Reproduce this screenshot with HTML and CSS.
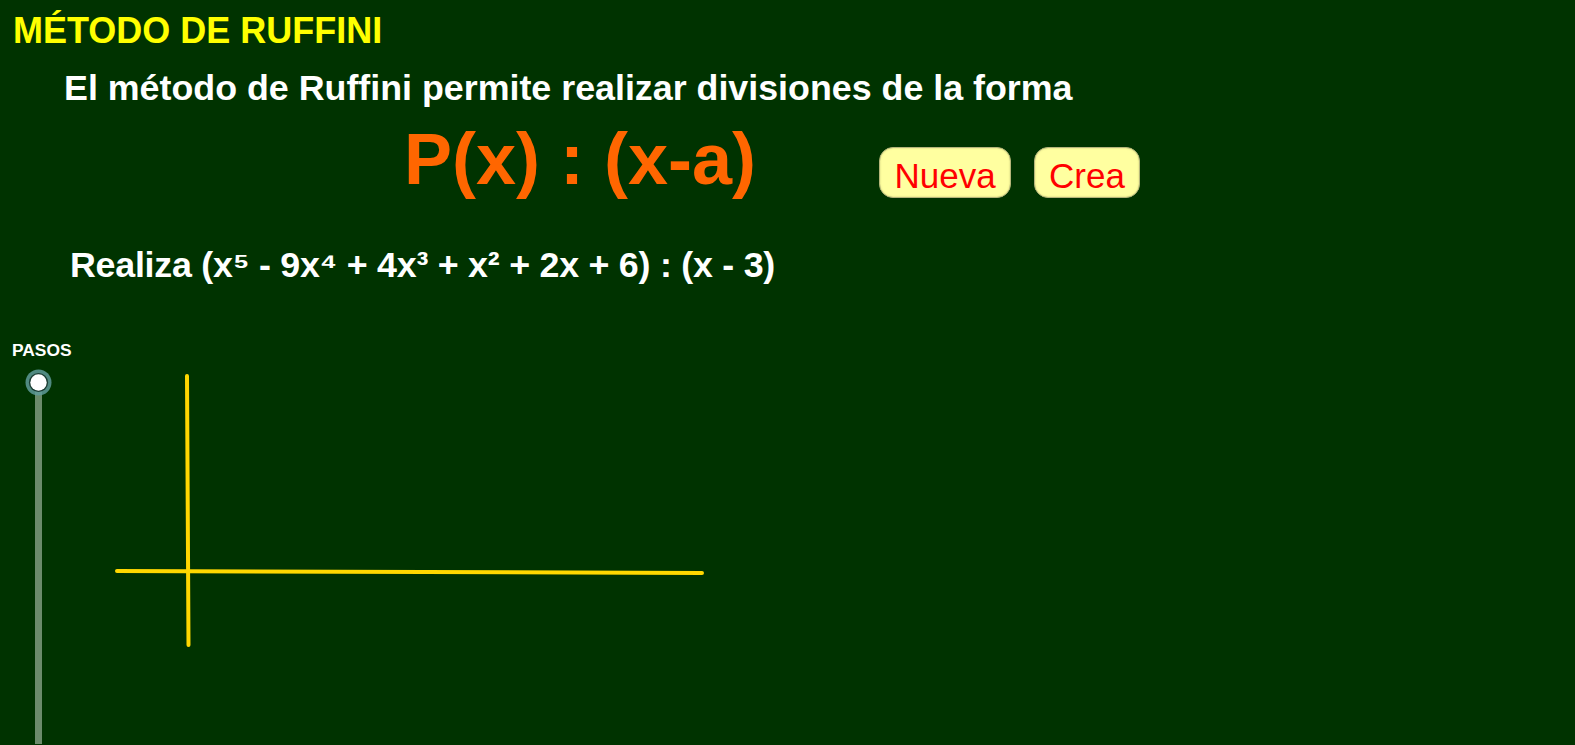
FILE: index.html
```html
<!DOCTYPE html>
<html lang="es">
<head>
<meta charset="utf-8">
<title>Método de Ruffini</title>
<link rel="stylesheet" href="styles.css">
</head>
<body>
<div class="title">MÉTODO DE RUFFINI</div>
<div class="intro">El método de Ruffini permite realizar divisiones de la forma</div>
<div class="formula-row">
  <div class="formula">P(x) : (x-a)</div>
  <div class="buttons">
    <button class="btn btn-nueva">Nueva</button>
    <button class="btn btn-crea">Crea</button>
  </div>
</div>
<div class="task">Realiza (x⁵ - 9x⁴ + 4x³ + x² + 2x + 6) : (x - 3)</div>
<div class="pasos">PASOS</div>
<svg class="canvas" width="1575" height="385" viewBox="0 360 1575 385" xmlns="http://www.w3.org/2000/svg">
  <rect x="35" y="390" width="7" height="360" fill="#6b8b6b"/>
  <circle cx="38.5" cy="383.5" r="13" fill="#5e9a98" fill-opacity="0.85"/>
  <circle cx="38.5" cy="383.5" r="9.6" fill="#1c3d33"/>
  <circle cx="38.5" cy="383.5" r="8.2" fill="#ffffff"/>
  <line x1="187" y1="377" x2="188.5" y2="646" stroke="#ffd700" stroke-width="4" stroke-linecap="round"/>
  <line x1="117" y1="572" x2="702" y2="574" stroke="#ffd700" stroke-width="4" stroke-linecap="round"/>
</svg>
</body>
</html>
```
FILE: styles.css
```css
html, body {
  margin: 0;
  padding: 0;
}
body {
  background: #003300;
  font-family: "Liberation Sans", Arial, sans-serif;
  width: 1575px;
  height: 745px;
  overflow: hidden;
}
.title {
  margin-top: 13px;
  padding-left: 13px;
  color: #ffff00;
  font-weight: bold;
  font-size: 36px;
  line-height: 36px;
}
.intro {
  margin-top: 21px;
  padding-left: 64px;
  color: #ffffff;
  font-weight: bold;
  font-size: 35.8px;
  line-height: 36px;
}
.formula-row {
  margin-top: 17px;
  padding-left: 404px;
  display: flex;
  align-items: flex-start;
  height: 72px;
}
.formula {
  color: #ff6600;
  font-weight: bold;
  font-size: 72px;
  line-height: 72px;
  white-space: nowrap;
}
.buttons {
  display: flex;
  gap: 23px;
  margin-top: 24px;
  margin-left: 123px;
}
.btn {
  box-sizing: border-box;
  height: 51px;
  padding: 6px 0 0 0;
  border: 1px solid #b5b57a;
  border-radius: 14px;
  background: #ffffa0;
  color: #ff0000;
  font-family: "Liberation Sans", Arial, sans-serif;
  font-size: 35px;
  line-height: 42px;
  text-align: center;
  vertical-align: top;
  box-shadow: inset 0 0 2px rgba(120,120,60,0.4);
}
.btn-nueva { width: 132px; }
.btn-crea { width: 106px; }
.task {
  margin-top: 52px;
  padding-left: 70px;
  color: #ffffff;
  font-weight: bold;
  font-size: 35.8px;
  line-height: 36px;
  letter-spacing: -0.25px;
  white-space: nowrap;
}
.pasos {
  margin-top: 58px;
  padding-left: 12px;
  color: #ffffff;
  font-weight: bold;
  font-size: 17.4px;
  line-height: 18px;
}
.canvas {
  display: block;
}
```
